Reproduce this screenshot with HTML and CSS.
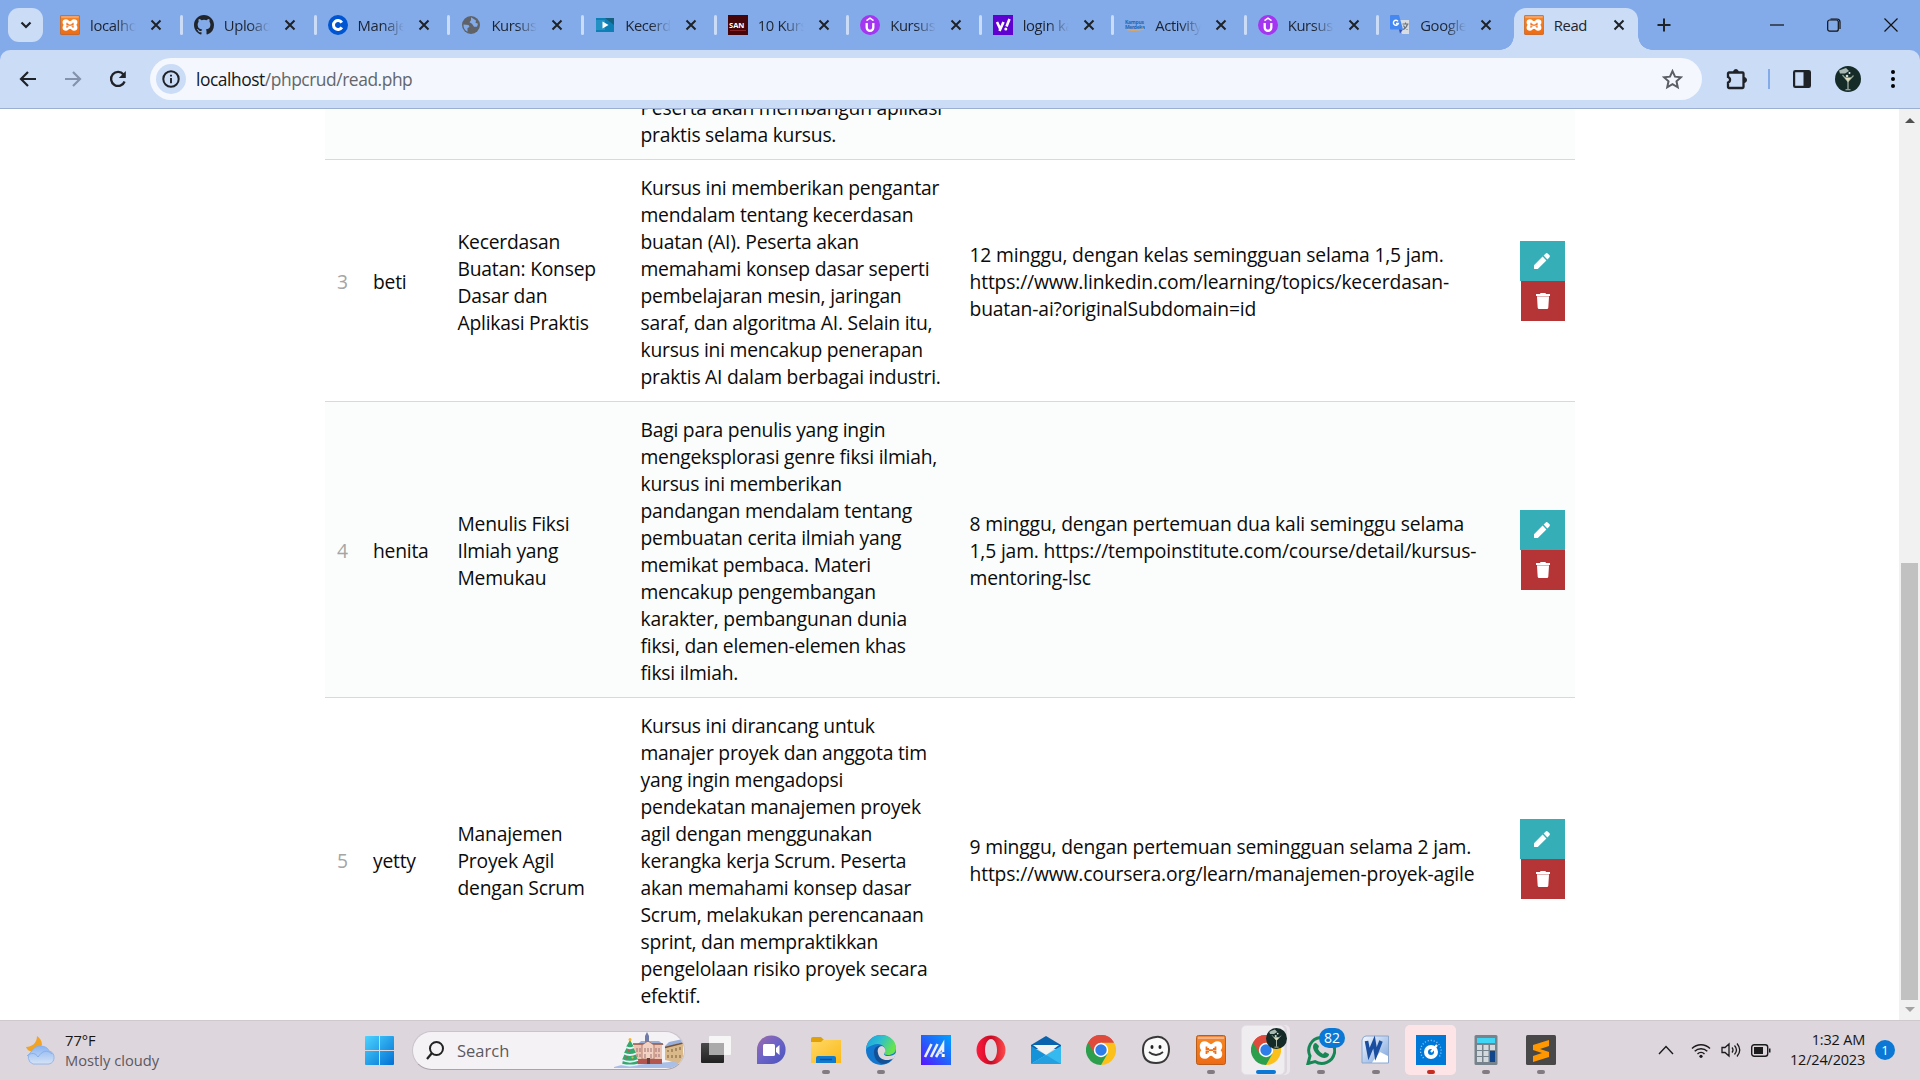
FILE: index.html
```html
<!DOCTYPE html>
<html lang="id">
<head>
<meta charset="utf-8">
<title>Read</title>
<link rel="stylesheet" href="styles.css">
</head>
<body>
<svg class="defs" width="0" height="0" aria-hidden="true">
  <defs>
    <linearGradient id="orange" x1="0" y1="0" x2="0" y2="1"><stop offset="0" stop-color="#e98a45"/><stop offset=".2" stop-color="#f58220"/><stop offset="1" stop-color="#ee6a14"/></linearGradient>
    <linearGradient id="win" x1="0" y1="0" x2="1" y2="1"><stop offset="0" stop-color="#4cd3ff"/><stop offset="1" stop-color="#0270d4"/></linearGradient>
    <linearGradient id="cloud" x1="0" y1="0" x2="0" y2="1"><stop offset="0" stop-color="#8ab4f2"/><stop offset="1" stop-color="#d5e3f6"/></linearGradient>
    <linearGradient id="chat" x1="0" y1="0" x2="1" y2="1"><stop offset="0" stop-color="#a06aa9"/><stop offset=".5" stop-color="#6a63c8"/><stop offset="1" stop-color="#4b53bc"/></linearGradient>
    <linearGradient id="folder" x1="0" y1="0" x2="1" y2="1"><stop offset="0" stop-color="#ffd867"/><stop offset="1" stop-color="#fbb917"/></linearGradient>
    <linearGradient id="edge1" x1="0" y1="0" x2="1" y2=".4"><stop offset="0" stop-color="#1b9de2"/><stop offset=".5" stop-color="#2dbfd0"/><stop offset="1" stop-color="#67e34d"/></linearGradient>
    <linearGradient id="asus" x1="0" y1="1" x2="1" y2="0"><stop offset="0" stop-color="#5a12ff"/><stop offset=".5" stop-color="#2262fa"/><stop offset="1" stop-color="#00a2ff"/></linearGradient>
    <linearGradient id="opera" x1="0" y1="0" x2="1" y2="0"><stop offset="0" stop-color="#ff1b3c"/><stop offset=".5" stop-color="#c80a25"/><stop offset="1" stop-color="#ff4b4b"/></linearGradient>
    <linearGradient id="dark" x1="0" y1="0" x2="0" y2="1"><stop offset="0" stop-color="#4a4a49"/><stop offset="1" stop-color="#212121"/></linearGradient>
    <linearGradient id="word" x1="0" y1="0" x2="1" y2="1"><stop offset="0" stop-color="#f5f9ff"/><stop offset="1" stop-color="#7ba3dc"/></linearGradient>
    <symbol id="xampp" viewBox="0 0 30 30">
      <rect x=".5" y=".5" width="29" height="29" rx="2" fill="url(#orange)" stroke="#bb5c18"/>
      <path d="M2 3h26" stroke="#f3b184" stroke-width="2"/>
      <path d="M9 7.500c3 0 3 3 6 3s3-3 6-3c5 0 5 6 1.500 7.500C26 17 26 22.500 21 22.500c-3 0-3-3-6-3s-3 3-6 3c-5 0-5-5.500-1.500-7.500C4 13.500 4 7.500 9 7.500z" fill="#fff" stroke="#fff" stroke-width="2.500"/>
      <path d="M10.500 11.500v2.500h2.500M19.500 11.500v2.500h-2.500M10.500 19v-2.500h2.500M19.500 19v-2.500h-2.500M13 15.200h4" fill="none" stroke="#ef7019" stroke-width="1.800"/>
    </symbol>
    <symbol id="udemy" viewBox="0 0 20 20">
      <circle cx="10" cy="10" r="10" fill="#a435f0"/>
      <path d="M6.500 5.600 10 3.200l3.500 2.400" fill="none" stroke="#fff" stroke-width="1.600"/>
      <path d="M6.700 8v4.500a3.300 3.300 0 0 0 6.600 0V8" fill="none" stroke="#fff" stroke-width="2.300"/>
    </symbol>
    <symbol id="close" viewBox="0 0 12 12"><path d="M1.500 1.500l9 9m0-9l-9 9" stroke="#1f2227" stroke-width="2" fill="none"/></symbol>
    <symbol id="chrome" viewBox="0 0 30 30">
      <path d="M15 15 2 7.500A15 15 0 0 1 28 7.500z" fill="#de4a3c"/>
      <path d="M15 15V7.500h13A15 15 0 0 1 15 30z" fill="#fbc11a"/>
      <path d="M2 7.500 15 15l6.500 3.700L15 30A15 15 0 0 1 2 7.500z" fill="#2c9f4d"/>
      <path d="M15 7.500h13a15 15 0 0 0-26 0l6.500 11z" fill="#de4a3c"/>
      <circle cx="15" cy="15" r="7.200" fill="#fff"/><circle cx="15" cy="15" r="5.700" fill="#2f7de9"/>
    </symbol>
    <symbol id="avatar" viewBox="0 0 26 26">
      <circle cx="13" cy="13" r="13" fill="#142b28"/>
      <path d="M4 4.500 11 2l3 3-4 2.500-5 0z" fill="#a9b8b3"/>
      <path d="M7.500 9 13 15.500 18.500 9.500" fill="none" stroke="#93a497" stroke-width="1.200"/>
      <path d="M13 15v8M10.500 23.700h5" fill="none" stroke="#b9c6b8" stroke-width="1.100"/>
      <path d="M9.500 11.500 13 15.500l3.500-4z" fill="#e0dfc0"/><circle cx="14.500" cy="7" r="1" fill="#e8efec"/><circle cx="12" cy="10" r="1.300" fill="#cfd9ce"/>
    </symbol>
    <symbol id="pencil" viewBox="0 0 16 16"><path d="M0 12.200 8.600 3.600l3.800 3.800L3.800 16H.4a.4.400 0 0 1-.4-.4zM9.600 2.600 11.500.7a1.700 1.700 0 0 1 2.400 0l1.400 1.400a1.700 1.700 0 0 1 0 2.400l-1.900 1.900z" fill="#fff"/></symbol>
    <symbol id="trash" viewBox="0 0 14 16"><path d="M0 1h4l.6-1h4.800L10 1h4v2H0z" fill="#fff"/><path d="M1 3h12v1H1z" fill="#e3b3b3"/><path d="M1 4h12l-.7 10.700a1.400 1.400 0 0 1-1.400 1.300H3.100a1.400 1.400 0 0 1-1.400-1.300z" fill="#fff"/></symbol>
  </defs>
</svg>

<header class="tabstrip">
  <button class="tab-search"><svg width="12" height="8" viewBox="0 0 12 8"><path d="M1.500 1.500 6 6l4.500-4.500" fill="none" stroke="#1f2227" stroke-width="2.200"/></svg></button>
  <nav class="tabs">
    <div class="tab wide"><svg class="fav"><use href="#xampp"/></svg><span class="label">localhost</span><svg class="x"><use href="#close"/></svg></div>
    <div class="tab wide"><svg class="fav" viewBox="0 0 16 16"><path fill="#20242b" d="M8 0C3.580 0 0 3.580 0 8c0 3.540 2.290 6.530 5.470 7.590.4.070.55-.17.55-.38v-1.490c-2.010.37-2.530-.49-2.690-.94-.09-.23-.48-.94-.82-1.130-.28-.15-.68-.52-.01-.53.630-.01 1.080.58 1.230.82.720 1.210 1.870.87 2.330.66.070-.52.280-.87.510-1.070-1.780-.2-3.640-.89-3.640-3.950 0-.87.310-1.590.82-2.150-.08-.2-.36-1.020.08-2.120 0 0 .67-.21 2.200.82a7.600 7.600 0 0 1 4 0c1.530-1.040 2.200-.82 2.200-.82.440 1.100.16 1.920.08 2.120.51.560.82 1.270.82 2.150 0 3.070-1.870 3.750-3.650 3.950.29.250.54.730.54 1.480v2.200c0 .21.150.46.550.38A8 8 0 0 0 16 8c0-4.420-3.580-8-8-8z"/></svg><span class="label">Upload</span><svg class="x"><use href="#close"/></svg></div>
    <div class="tab wide"><svg class="fav" viewBox="0 0 20 20"><circle cx="10" cy="10" r="10" fill="#0056d2"/><path d="M13.800 7.600a4.500 4.500 0 1 0 0 4.800" fill="none" stroke="#fff" stroke-width="3"/></svg><span class="label">Manajemen</span><svg class="x"><use href="#close"/></svg></div>
    <div class="tab wide"><svg class="fav" viewBox="0 0 20 20"><circle cx="10" cy="10" r="9" fill="#5f6368"/><path d="M2.500 9.500l5 .5 1 2-2 1 0 3.800A8 8 0 0 1 2.500 9.500zM10 2.300v3l-1.500 2 2.500 1.500 2 3 3 0 1-3-2.500-1L15 5.500z" fill="#84abe9"/></svg><span class="label">Kursus</span><svg class="x"><use href="#close"/></svg></div>
    <div class="tab"><svg class="fav" viewBox="0 0 20 20"><path d="M1 3h18v14H1z" fill="#0d7fb5"/><path d="M10 3h9v7z" fill="#13607f"/><path d="M1 5h9v10H1z" fill="#2391c4"/><path d="M7.500 6.500v7l6-3.500z" fill="#fff"/></svg><span class="label">Kecerdasan</span><svg class="x"><use href="#close"/></svg></div>
    <div class="tab"><svg class="fav" viewBox="0 0 20 20"><path d="M0 0h20v20H0z" fill="#450509"/><text x="1" y="13" class="san">SAN</text><path d="M2 15.500h16" stroke="#842225"/></svg><span class="label">10 Kursus</span><svg class="x"><use href="#close"/></svg></div>
    <div class="tab"><svg class="fav"><use href="#udemy"/></svg><span class="label">Kursus</span><svg class="x"><use href="#close"/></svg></div>
    <div class="tab"><svg class="fav" viewBox="0 0 20 20"><path d="M0 0h20v20H0z" fill="#5f01d1"/><path d="M4 7l3 6.500M10.500 7 6.500 16M13.500 11.500 16.500 4" stroke="#fff" stroke-width="2.600"/><circle cx="12.800" cy="14" r="1.500" fill="#fff"/></svg><span class="label">login kampus</span><svg class="x"><use href="#close"/></svg></div>
    <div class="tab"><svg class="fav" viewBox="0 0 20 20"><text x="0" y="9" class="km" textLength="19">Kampus</text><text x="0" y="14" class="km" textLength="20">Merdeka</text><path d="M2 14.500q8 1.500 17-.5" fill="none" stroke="#dda75f" stroke-width="1.500"/></svg><span class="label">Activity</span><svg class="x"><use href="#close"/></svg></div>
    <div class="tab"><svg class="fav"><use href="#udemy"/></svg><span class="label">Kursus</span><svg class="x"><use href="#close"/></svg></div>
    <div class="tab last"><svg class="fav" viewBox="0 0 20 20"><path d="M8 5h11v14h-7z" fill="#d8dce3"/><path d="M1 0h8l4 14.500H1a1 1 0 0 1-1-1V1a1 1 0 0 1 1-1z" fill="#4688f1"/><path d="M9 14.500h4L10 18.500z" fill="#3350b5"/><path d="M12.500 9h6M15.500 7.500V9m2 0q-1 4-4.500 5.500M13.500 10.500q1 3 4 4" stroke="#687078" fill="none" stroke-width="1.100"/><path d="M8 6.300A2.500 2.500 0 1 0 8.300 8.500H6" stroke="#fff" fill="none" stroke-width="1.400"/></svg><span class="label">Google</span><svg class="x"><use href="#close"/></svg></div>
    <div class="tab active"><svg class="fav"><use href="#xampp"/></svg><span class="label">Read</span><svg class="x"><use href="#close"/></svg></div>
  </nav>
  <svg class="new-tab" viewBox="0 0 14 14"><path d="M7 .5v13M.5 7h13" stroke="#1f2227" stroke-width="2"/></svg>
  <div class="window-buttons">
    <svg viewBox="0 0 14 14"><path d="M0 7h14" stroke="#111" stroke-width="1.200"/></svg>
    <svg viewBox="0 0 14 14"><rect x=".7" y="2" width="10.600" height="11.200" rx="2" fill="none" stroke="#111" stroke-width="1.200"/><path d="M3.500 1H10a3 3 0 0 1 3 3v7" fill="none" stroke="#111" stroke-width="1.200"/></svg>
    <svg viewBox="0 0 14 14"><path d="M.5.5l13 13m0-13l-13 13" stroke="#111" stroke-width="1.200"/></svg>
  </div>
</header>

<div class="toolbar-wrap">
<div class="toolbar">
  <div class="nav-buttons">
    <svg viewBox="0 0 20 20"><path d="M18 10H3.500M10 3l-7 7 7 7" fill="none" stroke="#1f2227" stroke-width="2.200"/></svg>
    <svg viewBox="0 0 20 20"><path d="M2 10h14.500M10 3l7 7-7 7" fill="none" stroke="#8493ab" stroke-width="2.200"/></svg>
    <svg viewBox="0 0 20 20"><path d="M16.600 12.500A7 7 0 1 1 15.500 5.500" fill="none" stroke="#1f2227" stroke-width="2.300"/><path d="M17.800 2v7h-7z" fill="#1f2227"/></svg>
  </div>
  <div class="omnibox">
    <span class="site-info"><svg viewBox="0 0 18 18"><circle cx="9" cy="9" r="7.700" fill="none" stroke="#1f2227" stroke-width="2"/><path d="M9 8v5.200M9 4.800v1.800" stroke="#1f2227" stroke-width="1.900"/></svg></span>
    <span class="url"><b>localhost</b>/phpcrud/read.php</span>
    <svg class="star" viewBox="0 0 20 20"><path d="M10 2l2.400 5.300 5.700.6-4.300 3.800 1.200 5.700-5-2.900-5 2.900 1.200-5.700L1.900 7.900l5.700-.6z" fill="none" stroke="#5b5f65" stroke-width="1.900"/></svg>
  </div>
  <div class="actions">
    <svg class="ext" viewBox="0 0 22 22"><path d="M3 4.500h13.500a1 1 0 0 1 1 1V19a1 1 0 0 1-1 1H3a1 1 0 0 1-1-1v-4.300a3 3 0 0 0 0-5.700V5.500a1 1 0 0 1 1-1z" fill="none" stroke="#1f2227" stroke-width="2.300"/><path d="M7.500 4a2.400 2.400 0 0 1 4.800 0zM18 9.500a2.500 2.500 0 0 1 0 5z" fill="#1f2227" stroke="#1f2227"/></svg>
    <i class="divider"></i>
    <svg class="side" viewBox="0 0 18 18"><rect x="1.100" y="1.100" width="15.800" height="15.800" rx="1.200" fill="none" stroke="#1f2227" stroke-width="2.200"/><path d="M10.500 1H17v16h-6.500z" fill="#1f2227"/></svg>
    <svg class="avatar"><use href="#avatar"/></svg>
    <svg class="dots" viewBox="0 0 4 18"><circle cx="2" cy="2" r="2"/><circle cx="2" cy="9" r="2"/><circle cx="2" cy="16" r="2"/></svg>
  </div>
</div>
</div>

<div class="viewport">
  <main class="page">
    <div class="course striped clipped">
      <span></span><span></span><span></span>
      <p>Peserta akan membangun aplikasi<br>praktis selama kursus.</p>
      <span></span><span></span>
    </div>
    <div class="course">
      <span class="num">3</span><span>beti</span>
      <p>Kecerdasan<br>Buatan: Konsep<br>Dasar dan<br>Aplikasi Praktis</p>
      <p>Kursus ini memberikan pengantar<br>mendalam tentang kecerdasan<br>buatan (AI). Peserta akan<br>memahami konsep dasar seperti<br>pembelajaran mesin, jaringan<br>saraf, dan algoritma AI. Selain itu,<br>kursus ini mencakup penerapan<br>praktis AI dalam berbagai industri.</p>
      <p class="duration">12 minggu, dengan kelas semingguan selama 1,5 jam.<br>https://www.linkedin.com/learning/topics/kecerdasan-<br>buatan-ai?originalSubdomain=id</p>
      <div class="buttons"><a class="edit"><svg><use href="#pencil"/></svg></a><a class="trash"><svg><use href="#trash"/></svg></a></div>
    </div>
    <div class="course striped">
      <span class="num">4</span><span>henita</span>
      <p>Menulis Fiksi<br>Ilmiah yang<br>Memukau</p>
      <p>Bagi para penulis yang ingin<br>mengeksplorasi genre fiksi ilmiah,<br>kursus ini memberikan<br>pandangan mendalam tentang<br>pembuatan cerita ilmiah yang<br>memikat pembaca. Materi<br>mencakup pengembangan<br>karakter, pembangunan dunia<br>fiksi, dan elemen-elemen khas<br>fiksi ilmiah.</p>
      <p class="duration">8 minggu, dengan pertemuan dua kali seminggu selama<br>1,5 jam. https://tempoinstitute.com/course/detail/kursus-<br>mentoring-lsc</p>
      <div class="buttons"><a class="edit"><svg><use href="#pencil"/></svg></a><a class="trash"><svg><use href="#trash"/></svg></a></div>
    </div>
    <div class="course">
      <span class="num">5</span><span>yetty</span>
      <p>Manajemen<br>Proyek Agil<br>dengan Scrum</p>
      <p>Kursus ini dirancang untuk<br>manajer proyek dan anggota tim<br>yang ingin mengadopsi<br>pendekatan manajemen proyek<br>agil dengan menggunakan<br>kerangka kerja Scrum. Peserta<br>akan memahami konsep dasar<br>Scrum, melakukan perencanaan<br>sprint, dan mempraktikkan<br>pengelolaan risiko proyek secara<br>efektif.</p>
      <p class="duration">9 minggu, dengan pertemuan semingguan selama 2 jam.<br>https://www.coursera.org/learn/manajemen-proyek-agile</p>
      <div class="buttons"><a class="edit"><svg><use href="#pencil"/></svg></a><a class="trash"><svg><use href="#trash"/></svg></a></div>
    </div>
  </main>
  <div class="scrollbar">
    <svg viewBox="0 0 10 5"><path d="M0 5l5-5 5 5z" fill="#505050"/></svg>
    <i class="thumb"></i>
    <svg viewBox="0 0 10 5"><path d="M0 0h10L5 5z" fill="#a3a3a3"/></svg>
  </div>
</div>

<footer class="taskbar">
  <div class="weather">
    <svg viewBox="0 0 32 30"><path d="M12 1c3 2 5 5 5 9l-7 7c-5 0-8-2-9-5 6 0 11-4 11-11z" fill="#f2a324"/><path d="M8 29a7 7 0 0 1-1.500-12.500C8 13 12 11 15 11c5 0 8 2 9 5a6.700 6.700 0 0 1 0 13z" fill="url(#cloud)" stroke="#87aee9" stroke-width=".8"/><path d="M2 21c4-4 9-3 11 1 4-6 9-8 14-3" fill="none" stroke="#87aee9"/></svg>
    <div><b>77°F</b><span>Mostly cloudy</span></div>
  </div>
  <svg class="start" viewBox="0 0 29 29"><path d="M0 1a1 1 0 0 1 1-1h13v14H0zM15 0h13a1 1 0 0 1 1 1v13H15zM0 15h14v14H1a1 1 0 0 1-1-1zM15 15h14v13a1 1 0 0 1-1 1H15z" fill="url(#win)"/></svg>
  <div class="search">
    <svg class="lens" viewBox="0 0 18 19"><circle cx="10.500" cy="7.500" r="6.500" fill="none" stroke="#222" stroke-width="2"/><path d="M6 12 1 18" stroke="#222" stroke-width="2.200"/></svg>
    <span>Search</span>
    <svg class="scene" viewBox="0 0 70 36">
      <path d="M0 35q8-3 20-2l35-3 12-3-5 9H0z" fill="#a9bfe8"/>
      <path d="M23 13l4-4h18l5 4z" fill="#9bb0d8"/>
      <path d="M20 12h28v20H20z" fill="#ecc2b1"/><path d="M20 27h28v5H20z" fill="#b35650"/><path d="M19 12h30" stroke="#8f5448" stroke-width="1.500"/>
      <path d="M28 13l6-4 6 4v14H28z" fill="#f2d2c2" stroke="#a25e50" stroke-width=".7"/>
      <path d="M31 4l2-4 2 4v6h-4z" fill="#6e7ca7"/>
      <path d="M23 16v4M26 16v4M31 16v4M34 16v4M37 16v4M42 16v4M45 16v4M23 22v3M26 22v3M31 22v4M37 22v4M42 22v3M45 22v3" stroke="#a5797a" stroke-width="1.100"/>
      <path d="M33 26h3v6h-3z" fill="#663f38"/>
      <path d="M51 15l18-4v21l-18-4z" fill="#d9b98a"/><path d="M51 14l4-4 14-3v3l-18 6z" fill="#9aafd9"/><path d="M51 15.500l18-4.500" stroke="#765238" stroke-width="1.500"/>
      <path d="M54 18v2M58 17v3M62 16v3M66 15v3M54 23v3M58 23v3M62 23v3M66 23v3" stroke="#8f6f4c" stroke-width="1.300"/>
      <path d="M16 8l4 7h-1l3 6h-1l3 7h-1l1 5H8l1-5H8l3-7h-1l3-6h-1z" fill="#35a86b"/>
      <path d="M12 15q4 2.500 8 0M10 21.500q6 3 12 0M8 28q8 3.500 16 0M8 32.500q8 2 16 0" stroke="#e6f1fb" stroke-width="1.800" fill="none"/><circle cx="16" cy="7.500" r="1.500" fill="#f5b324"/><circle cx="15" cy="19" r="1.100" fill="#e44949"/><circle cx="18.500" cy="25.500" r="1.100" fill="#f3b72c"/><circle cx="13" cy="25.500" r="1.100" fill="#e44949"/>
    </svg>
  </div>
  <div class="apps">
    <span class="app"><svg viewBox="0 0 30 30"><rect x="0" y="8" width="23" height="20" rx="1" fill="url(#dark)"/><rect x="8" y="1" width="22" height="19" rx="1" fill="#fafafa" fill-opacity=".9"/><path d="M8 8h15v12H8z" fill="#aaa"/></svg></span>
    <span class="app"><svg viewBox="0 0 30 30"><path d="M1 29V15A14.300 14.300 0 1 1 15 29z" fill="url(#chat)"/><rect x="7" y="9" width="12" height="12" rx="1.500" fill="#fff"/><path d="M20 13l3.500-3v10L20 17z" fill="#fff"/></svg></span>
    <span class="app open"><svg viewBox="0 0 30 30"><path d="M0 4a2 2 0 0 1 2-2h8l3 3v5H0z" fill="#dfa107"/><path d="M0 7h10l2-2h18v23H0z" fill="url(#folder)"/><path d="M5 28v-5a2 2 0 0 1 2-2h16a2 2 0 0 1 2 2v5z" fill="#0f7bd0"/><path d="M9 24.500h12" stroke="#124e8f" stroke-width="1.400"/></svg></span>
    <span class="app open"><svg viewBox="0 0 30 30"><circle cx="15" cy="15" r="15" fill="#1277ce"/><path d="M0 14C1 5 7 0 15 0c9 0 15 6 15 13 0 5-4 7-8 7-3 0-4-1-4-2s2-2 1-5c-2-4-8-5-12-3-4 1-6 3-7 4z" fill="url(#edge1)"/><path d="M8 17c0-5 4-7 8-6-3 1-5 4-4 7 1 5 8 8 15 4-1 3-5 7-10 7-6-1-9-6-9-12z" fill="#135197"/><path d="M12 18c-1-4 1-7 4-7 3 1 4 4 3 6-2 2-1 4 3 4 4 0 6-1 8-3v1l-2 4c-7 4-15 2-16-5z" fill="#ded6dd"/></svg></span>
    <span class="app"><svg viewBox="0 0 30 30"><path d="M0 0h30v30H0z" fill="url(#asus)"/><path d="M4 22l6.500-13M10 22l6.500-13" fill="none" stroke="#eaf0ff" stroke-width="2.600"/><path d="M15 22l7-12.500V17" fill="none" stroke="#eaf0ff" stroke-width="2.600"/><path d="M20.700 19h3v3h-3z" fill="#fff"/><path d="M17.500 18h4" stroke="#b7cbff" stroke-width="2"/></svg></span>
    <span class="app"><svg viewBox="0 0 30 30"><path fill-rule="evenodd" d="M15 .5a14.500 14.500 0 1 0 0 29 14.500 14.500 0 0 0 0-29zm0 3.500c3.500 0 6 5 6 11s-2.500 11-6 11-6-5-6-11 2.500-11 6-11z" fill="url(#opera)"/></svg></span>
    <span class="app"><svg viewBox="0 0 30 30"><path d="M0 10 15 1l15 9v4H0z" fill="#0964ad"/><path d="M2 10h26L15 20z" fill="#f3f3f2"/><path d="M0 11l15 9L0 29z" fill="#1593d8"/><path d="M30 11v18H0z" fill="#36b9ef"/><path d="M15 20 30 29H0z" fill="#249fdf"/></svg></span>
    <span class="app"><svg viewBox="0 0 30 30"><use href="#chrome"/></svg></span>
    <span class="app"><svg viewBox="0 0 30 30"><path d="M15 2C22 1 28 6 28 14S24 28 15 28 2 24 2 15 7 3 15 2z" fill="#fafafa" stroke="#373737" stroke-width="2"/><ellipse cx="11" cy="12" rx="1.500" ry="2" fill="#222"/><ellipse cx="19" cy="12" rx="1.500" ry="2" fill="#222"/><path d="M8 17q7 6 14 0" fill="none" stroke="#333" stroke-width="1.700"/></svg></span>
    <span class="app open"><svg viewBox="0 0 30 30"><use href="#xampp"/></svg></span>
    <span class="app current"><svg viewBox="0 0 30 30"><use href="#chrome"/></svg><svg class="mini"><use href="#avatar"/></svg></span>
    <span class="app open"><svg viewBox="0 0 30 30"><path d="M2 28.500 4 21A13 13 0 1 1 9 26.500z" fill="none" stroke="#178755" stroke-width="3"/><path d="M10 8l3 3-1 3c1 2 3 4 5 5l2-2 4 2c0 3-3 4-5 4-6-1-11-7-11-11 0-2 1-4 3-4z" fill="#178755"/></svg><b class="count">82</b></span>
    <span class="app open"><svg viewBox="0 0 30 30"><path d="M5 1h22.500v27H1V5q1-4 4-4z" fill="url(#word)" stroke="#8da6cc"/><path d="M19 17l8 4v6.500H11z" fill="#fff"/><path d="M5.500 6l2.500 13 5-12 2 12L20 6" fill="none" stroke="#1b4e9f" stroke-width="3.600"/></svg></span>
    <span class="app alert"><svg viewBox="0 0 30 30"><path d="M0 0h30v30H0z" fill="#0078d7"/><circle cx="15" cy="17" r="5" fill="none" stroke="#fff" stroke-width="4"/><path d="M15 17l6-7" stroke="#fff" stroke-width="2.200"/><path d="M7.500 23A10.300 10.300 0 1 1 23 22" fill="none" stroke="#9fcdf5" stroke-width="1.300" stroke-dasharray="1 2"/></svg></span>
    <span class="app open"><svg viewBox="0 0 30 30"><rect x="3.500" width="23" height="30" rx="1.500" fill="#76838c"/><path d="M6 3h18v5H6z" fill="#3fd5f5"/><path d="M6 10h5v5H6zm6.500 0h5v5h-5zm6.500 0h5v5h-5zM6 16h5v5H6zm6.500 0h5v5h-5zM6 22h5v5H6zm6.500 0h5v5h-5z" fill="#d4d9dd"/><path d="M19 16h5v11h-5z" fill="#11458c"/></svg></span>
    <span class="app open"><svg viewBox="0 0 30 30"><rect width="30" height="30" rx="1.500" fill="#484848"/><path d="M23 5v6l-9 3 9 3v5L7 27v-6l9-3-9-3v-5z" fill="#ff9800"/></svg></span>
  </div>
  <div class="tray">
    <svg class="chev" viewBox="0 0 16 10"><path d="M1 9l7-7.500L15 9" fill="none" stroke="#1b1b1b" stroke-width="1.400"/></svg>
    <svg class="wifi" viewBox="0 0 20 15"><path d="M1 5.500a12.700 12.700 0 0 1 18 0M3.700 8.300a8.900 8.900 0 0 1 12.600 0M6.500 11a5 5 0 0 1 7 0" fill="none" stroke="#1b1b1b" stroke-width="1.400"/><circle cx="10" cy="13.300" r="1.600" fill="#1b1b1b"/></svg>
    <svg class="vol" viewBox="0 0 20 16"><path d="M1 5.500h3L8 2v12l-4-3.500H1zM11 5.500q2 2.500 0 5M13.500 3.500q4 4.500 0 9M16 1.500q5.500 6.500 0 13" fill="none" stroke="#1b1b1b" stroke-width="1.300"/></svg>
    <svg class="bat" viewBox="0 0 20 13"><rect x=".7" y=".7" width="16" height="11.600" rx="2.500" fill="none" stroke="#1b1b1b" stroke-width="1.400"/><path d="M3 3h9v7H3z" fill="#1b1b1b"/><path d="M18 4.500h1.500v4H18z" fill="#1b1b1b"/></svg>
    <div class="clock"><span>1:32 AM</span><span>12/24/2023</span></div>
    <b class="notice">1</b>
  </div>
</footer>
</body>
</html>
```

FILE: styles.css
```css
* { box-sizing: border-box; }
body {
  margin: 0;
  width: 1920px;
  height: 1080px;
  overflow: hidden;
  display: flex;
  flex-direction: column;
  background: #fff;
  color: #111;
  font-family: "Open Sans", "Noto Sans", sans-serif;
}
svg { display: block; flex: none; }
.defs { position: absolute; }

/* Tab strip */
.tabstrip {
  height: 50px;
  flex: none;
  display: flex;
  align-items: center;
  padding-left: 8px;
  background: #84abe9;
}
.tab-search {
  width: 35px;
  height: 34px;
  padding: 0;
  border: 0;
  border-radius: 11px;
  background: #cbdcf7;
  display: grid;
  place-items: center;
}
.tabs { display: flex; height: 50px; margin-left: 5px; }
.tab {
  width: 132.5px;
  flex: none;
  display: flex;
  align-items: center;
  padding-left: 12px;
  position: relative;
}
.tab.wide { width: 133.8px; }
.tab::after {
  content: "";
  position: absolute;
  right: -1px;
  top: 15px;
  width: 3px;
  height: 20px;
  border-radius: 2px;
  background: #cbdcf7;
}
.tab.last::after { display: none; }
.fav { width: 20px; height: 20px; }
.label {
  width: 46px;
  margin-left: 10px;
  overflow: hidden;
  white-space: nowrap;
  font-size: 14.8px;
  letter-spacing: -.35px;
  line-height: 20px;
  color: #1d2430;
  -webkit-mask-image: linear-gradient(90deg, #000 55%, transparent);
  mask-image: linear-gradient(90deg, #000 55%, transparent);
}
.x { width: 12px; height: 12px; margin-left: 14px; }
.tab.active {
  width: 124px;
  height: 42px;
  margin-top: 8px;
  margin-left: 3px;
  padding: 0 0 8px 10px;
  background: #cbdcf7;
  border-radius: 12px 12px 0 0;
}
.active .label { -webkit-mask-image: none; mask-image: none; }
.active .x { margin-left: 13px; }
.tab.active::before,
.tab.active::after {
  content: "";
  position: absolute;
  top: auto;
  bottom: 0;
  width: 14px;
  height: 14px;
  border-radius: 0;
}
.tab.active::before { left: -14px; background: radial-gradient(circle at 0 0, transparent 13.5px, #cbdcf7 14px); }
.tab.active::after { right: -14px; background: radial-gradient(circle at 100% 0, transparent 13.5px, #cbdcf7 14px); }
.new-tab { width: 14px; height: 14px; margin-left: 19px; }
.window-buttons { margin-left: auto; display: flex; gap: 43px; padding-right: 22px; }
.window-buttons svg { width: 14px; height: 14px; }

/* Toolbar */
.toolbar-wrap { flex: none; background: #84abe9; }
.toolbar {
  height: 59px;
  display: flex;
  align-items: center;
  background: #cbdcf7;
  border-bottom: 1px solid #9dafd0;
  border-radius: 10px 10px 0 0;
}
.nav-buttons { display: flex; gap: 25px; padding-left: 18px; width: 150px; }
.nav-buttons svg { width: 20px; height: 20px; }
.omnibox {
  width: 1552px;
  height: 42px;
  border-radius: 21px;
  background: #f4f7fd;
  display: flex;
  align-items: center;
  padding: 0 19px 0 6px;
}
.site-info {
  width: 30px;
  height: 30px;
  border-radius: 50%;
  background: #cbdcf7;
  display: grid;
  place-items: center;
}
.site-info svg { width: 18px; height: 18px; }
.url { margin-left: 10px; font-size: 17.4px; letter-spacing: -.45px; color: #62666c; }
.url b { font-weight: 400; color: #16181c; }
.star { width: 21px; height: 21px; margin-left: auto; }
.actions { display: flex; align-items: center; padding-left: 24px; }
.ext { width: 22px; height: 22px; }
.divider { width: 2px; height: 20px; margin-left: 20px; background: #84abe9; }
.side { width: 18px; height: 18px; margin-left: 23px; }
.avatar { width: 26px; height: 26px; margin-left: 24px; }
.dots { width: 4px; height: 18px; margin-left: 30px; }

/* Page */
.viewport { height: 911px; flex: none; display: flex; overflow: hidden; }
.page {
  width: 1250px;
  margin-left: 325px;
  display: flex;
  flex-direction: column;
  justify-content: flex-end;
  font-size: 19.3px;
  line-height: 27px;
  letter-spacing: -.23px;
  color: #0b0b0b;
}
.course {
  flex: none;
  display: grid;
  grid-template-columns: 36px 84.500px 183px 329px 550px 45px;
  align-items: center;
  padding: 12.500px 0 12.500px 12px;
  border-top: 1px solid #d2dcdc;
  white-space: nowrap;
}
.striped { background: #fafdfc; }
.num { color: #a5a5a5; }
.course p, .course span { margin: 1px 0 -1px; }
.course .duration { letter-spacing: -.16px; }
.buttons { width: 45px; }
.buttons a { height: 40px; display: grid; place-items: center; }
.edit { background: #36aeb7; }
.trash { background: #b53435; margin-left: 1px; }
.edit svg { width: 16px; height: 16px; }
.trash svg { width: 14px; height: 16px; }
.scrollbar {
  width: 21px;
  margin-left: auto;
  padding: 9px 0 8px;
  background: #f1f1f1;
  display: flex;
  flex-direction: column;
  align-items: center;
}
.scrollbar svg { width: 10px; height: 5px; }
.thumb { width: 17px; height: 437px; margin: auto 0 7px; background: #c1c1c1; }

/* Taskbar */
.taskbar {
  height: 60px;
  flex: none;
  display: flex;
  align-items: center;
  padding-bottom: 1px;
  background: #ddd6dd;
  border-top: 1px solid #cfc9cf;
}
.weather { width: 365px; padding-left: 25px; display: flex; align-items: center; }
.weather svg { width: 32px; height: 30px; }
.weather div { margin-left: 8px; display: flex; flex-direction: column; font-size: 14.700px; line-height: 20px; color: #5c585d; }
.weather b { font-weight: 400; color: #151515; }
.start { width: 29px; height: 29px; }
.search {
  width: 273px;
  height: 39px;
  margin-left: 18px;
  border: 1px solid #cac3cb;
  border-bottom-color: #aaa3ab;
  border-radius: 20px;
  background: #f5f2f6;
  display: flex;
  align-items: center;
  padding-left: 13px;
  overflow: hidden;
  font-size: 16.500px;
  color: #5b595d;
}
.lens { width: 18px; height: 19px; }
.search span { margin-left: 13px; }
.scene { width: 70px; height: 36px; margin-left: auto; }
.apps { display: flex; margin-left: 3px; }
.app {
  width: 55px;
  height: 50px;
  display: grid;
  place-items: center;
  position: relative;
}
.app svg { width: 30px; height: 30px; position: relative; }
.open::after, .current::after, .alert::after {
  content: "";
  position: absolute;
  left: 24px;
  bottom: 1px;
  width: 8px;
  height: 4px;
  border-radius: 2px;
  background: #827b82;
}
.current::before, .alert::before {
  content: "";
  position: absolute;
  inset: 0 8px 0 3px;
  border-radius: 5px;
  background: #f0edf1;
  border: 1px solid #e5e0e6;
  box-shadow: 2px 0 0 #ddd6dd, 5px 0 0 #ebe6ec;
}
.current::after { left: 18px; width: 20px; background: #0a78d4; }
.alert::before { inset: 0 2px; border: 0; background: #fde5e7; box-shadow: none; }
.alert::after { background: #c62b20; }
.app .mini { position: absolute; left: 28px; top: 3px; width: 21px; height: 21px; }
.count, .notice {
  background: #0a78d4;
  color: #fff;
  font-weight: 400;
  text-align: center;
}
.count { position: absolute; left: 26px; top: 3px; width: 26px; height: 20px; border-radius: 10px; font-size: 14px; line-height: 20px; }
.tray { flex: 1; display: flex; align-items: center; justify-content: flex-end; padding-right: 25px; }
.chev { width: 16px; height: 10px; margin-right: 17px; }
.wifi { width: 20px; height: 15px; margin-right: 10px; }
.vol { width: 20px; height: 16px; margin-right: 10px; }
.bat { width: 20px; height: 13px; }
.clock { width: 94px; margin-right: 1px; display: flex; flex-direction: column; align-items: flex-end; font-size: 14.500px; letter-spacing: -.2px; line-height: 20px; color: #151515; }
.notice { width: 20px; height: 20px; margin-left: 9px; border-radius: 50%; font-size: 13px; line-height: 20px; }
.san { font: 700 7.500px "Open Sans", sans-serif; fill: #fff; }
.km { font: 700 5px "Open Sans", sans-serif; fill: #1e66b5; }
```
